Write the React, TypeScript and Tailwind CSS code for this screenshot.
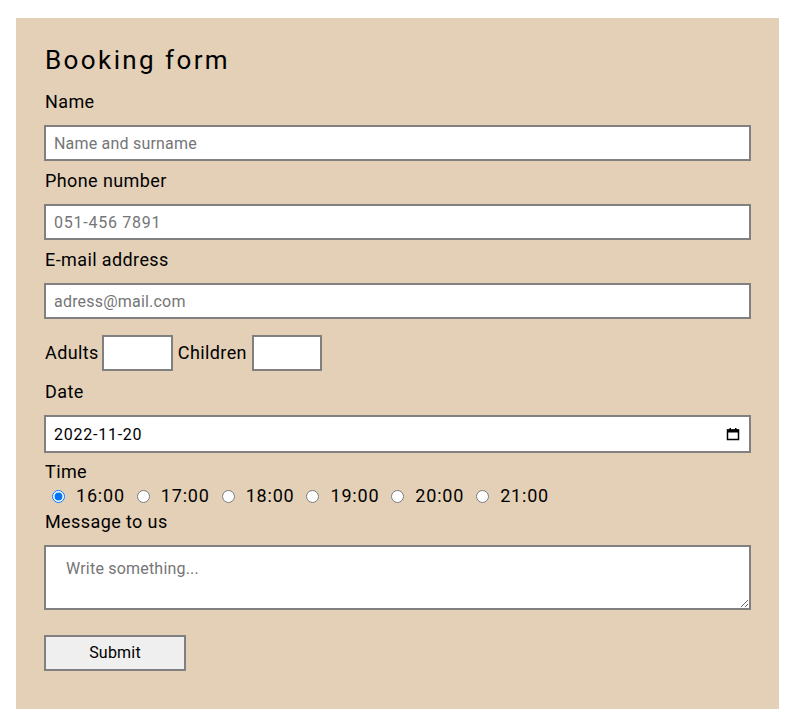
import React from 'react';

const TIMES = ['16:00', '17:00', '18:00', '19:00', '20:00', '21:00'];

const inputCls =
  'block w-full h-[36px] border-2 border-[#808080] bg-white px-2 text-[16px] text-black placeholder:text-[#757575] outline-none';

const labelCls = 'block text-[18px] leading-[22px] tracking-[0.4px] ml-[1px]';

function CalendarIcon() {
  return (
    <svg width="14" height="14" viewBox="0 0 14 14" className="absolute right-[11px] top-[12px] pointer-events-none">
      <rect x="1.5" y="3" width="11" height="9.5" fill="none" stroke="#000" strokeWidth="1.5" />
      <rect x="1" y="2.5" width="12" height="3" fill="#000" />
      <rect x="3.5" y="1" width="1.5" height="2" fill="#000" />
      <rect x="9" y="1" width="1.5" height="2" fill="#000" />
    </svg>
  );
}

export default function App() {
  return (
    <div className="min-h-[718px] bg-white pt-[18px] pl-[16px] pr-[15px] text-black" style={{ fontFamily: 'Roboto, "Liberation Sans", sans-serif' }}>
      <form className="bg-[#e3d0b7] px-[28px] pt-[24px] pb-[38px]" onSubmit={(e) => e.preventDefault()}>
        <h1 className="text-[26px] leading-[36px] tracking-[2.4px] ml-[1px] font-normal">Booking form</h1>

        <label className={`${labelCls} mt-[13px]`}>Name</label>
        <input className={`${inputCls} mt-[12px] tracking-[0.2px]`} placeholder="Name and surname" />

        <label className={`${labelCls} mt-[9px]`}>Phone number</label>
        <input className={`${inputCls} mt-[12px] tracking-[0.75px]`} placeholder="051-456 7891" />

        <label className={`${labelCls} mt-[9px]`}>E-mail address</label>
        <input className={`${inputCls} mt-[12px] tracking-[0.2px]`} placeholder="adress@mail.com" />

        <div className="flex items-center mt-[16px] text-[18px] leading-[22px] tracking-[0.4px] ml-[1px]">
          <span>Adults</span>
          <input className="ml-[3px] w-[71px] h-[36px] border-2 border-[#808080] bg-white outline-none" />
          <span className="ml-[5px]">Children</span>
          <input className="ml-[5px] w-[70px] h-[36px] border-2 border-[#808080] bg-white outline-none" />
        </div>

        <label className={`${labelCls} mt-[10px]`}>Date</label>
        <div className="relative mt-[12px]">
          <input
            type="text"
            defaultValue="2022-11-20"
            className="block w-full h-[38px] border-2 border-[#808080] bg-white px-2 text-[16px] tracking-[0.75px] text-black outline-none"
          />
          <CalendarIcon />
        </div>

        <label className={`${labelCls} mt-[8px]`}>Time</label>
        <div className="flex items-center text-[18px] leading-[24px] tracking-[0.8px] mt-[1px]">
          {TIMES.map((t, i) => (
            <label key={t} className="flex items-center">
              <input type="radio" name="time" defaultChecked={i === 0} className="ml-[8px] mr-[11px] w-[13px] h-[13px]" />
              <span className="mr-[4px]">{t}</span>
            </label>
          ))}
        </div>

        <label className={`${labelCls} mt-[3px]`}>Message to us</label>
        <textarea
          className="block w-full h-[65px] mt-[12px] border-2 border-[#808080] bg-white px-[20px] py-[10px] text-[16px] tracking-[0.2px] placeholder:text-[#757575] outline-none"
          placeholder="Write something..."
        />

        <button
          type="submit"
          className="block mt-[25px] w-[142px] h-[36px] border-2 border-[#808080] bg-[#efefef] text-[16px] tracking-[0.2px] text-black"
        >
          Submit
        </button>
      </form>
    </div>
  );
}
